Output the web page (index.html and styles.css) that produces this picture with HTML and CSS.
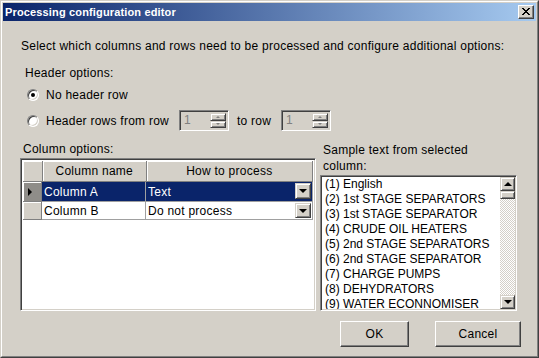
FILE: index.html
```html
<!DOCTYPE html>
<html lang="en">
<head>
    <meta charset="UTF-8">
    <title>Processing configuration editor</title>
    <link rel="stylesheet" href="styles.css">
</head>
<body>
    <div class="window">
        <div class="frame">
            <div class="titlebar">
                <span class="title">Processing configuration editor</span>
                <span class="close-btn">
                    <svg width="8" height="7" viewBox="0 0 8 7" shape-rendering="crispEdges">
                        <path d="M0 0h2v1h-2zM6 0h2v1h-2zM1 1h2v1h-2zM5 1h2v1h-2zM2 2h4v1h-4zM3 3h2v1h-2zM2 4h4v1h-4zM1 5h2v1h-2zM5 5h2v1h-2zM0 6h2v1h-2zM6 6h2v1h-2z" fill="#000"/>
                    </svg>
                </span>
            </div>
            <div class="content">
                <p class="intro">Select which columns and rows need to be processed and configure additional options:</p>

                <div class="group-label">Header options:</div>
                <div class="radio-row first">
                    <span class="radio checked"></span>
                    <span>No header row</span>
                </div>
                <div class="radio-row second">
                    <span class="radio"></span>
                    <span class="from-label">Header rows from row</span>
                    <span class="spin">
                        <span class="spin-value">1</span>
                        <span class="spin-buttons">
                            <span class="spin-btn"><span class="tiny-up"></span></span>
                            <span class="spin-btn"><span class="tiny-down"></span></span>
                        </span>
                    </span>
                    <span class="to-label">to row</span>
                    <span class="spin">
                        <span class="spin-value">1</span>
                        <span class="spin-buttons">
                            <span class="spin-btn"><span class="tiny-up"></span></span>
                            <span class="spin-btn"><span class="tiny-down"></span></span>
                        </span>
                    </span>
                </div>

                <div class="panels">
                    <div class="columns-panel">
                        <div class="panel-label">Column options:</div>
                        <div class="grid">
                            <div class="grid-row head">
                                <div class="row-head"></div>
                                <div class="col-head name">Column name</div>
                                <div class="col-head how">How to process</div>
                            </div>
                            <div class="grid-row current">
                                <div class="row-head"><span class="pointer"></span></div>
                                <div class="cells">
                                    <div class="cell name">Column A</div>
                                    <div class="cell how">Text<span class="combo-btn"><span class="arrow-down"></span></span></div>
                                </div>
                            </div>
                            <div class="grid-row">
                                <div class="row-head"></div>
                                <div class="cells">
                                    <div class="cell name">Column B</div>
                                    <div class="cell how">Do not process<span class="combo-btn"><span class="arrow-down"></span></span></div>
                                </div>
                            </div>
                        </div>
                    </div>

                    <div class="sample-panel">
                        <div class="panel-label two-lines">Sample text from selected<br>column:</div>
                        <div class="listbox">
                            <ul class="items">
                                <li>(1) English</li>
                                <li>(2) 1st STAGE SEPARATORS</li>
                                <li>(3) 1st STAGE SEPARATOR</li>
                                <li>(4) CRUDE OIL HEATERS</li>
                                <li>(5) 2nd STAGE SEPARATORS</li>
                                <li>(6) 2nd STAGE SEPARATOR</li>
                                <li>(7) CHARGE PUMPS</li>
                                <li>(8) DEHYDRATORS</li>
                                <li>(9) WATER ECONNOMISER</li>
                            </ul>
                            <div class="scrollbar">
                                <span class="sb-btn"><span class="arrow-up"></span></span>
                                <span class="sb-thumb"></span>
                                <span class="sb-track"></span>
                                <span class="sb-btn"><span class="arrow-down"></span></span>
                            </div>
                        </div>
                    </div>
                </div>

                <div class="buttons">
                    <button class="btn ok">OK</button>
                    <button class="btn cancel">Cancel</button>
                </div>
            </div>
        </div>
    </div>
</body>
</html>
```

FILE: styles.css
```css
:root {
    --face: #d4d0c8;
    --shadow: #808080;
    --dark: #404040;
    --light: #ffffff;
    --navy: #0a246a;
}
body { margin: 0; font-family: 'Liberation Sans', Arial, sans-serif; font-size: 12px; letter-spacing: 0.25px; color: #000; background: var(--face); }
.window { width: 539px; height: 358px; box-sizing: border-box; border: 1px solid; border-color: var(--face) var(--dark) var(--dark) var(--face); background: var(--face); }
.frame { height: 100%; box-sizing: border-box; border: 1px solid; border-color: var(--light) var(--shadow) var(--shadow) var(--light); padding: 1px; display: flex; flex-direction: column; }

/* Barra de titulo */
.titlebar { height: 18px; flex: none; display: flex; align-items: center; justify-content: space-between; padding: 0 2px; background: linear-gradient(to right, var(--navy), #a6caf0); }
.title { color: #fff; font-weight: bold; font-size: 11px; letter-spacing: 0.15px; }
.close-btn { width: 16px; height: 14px; box-sizing: border-box; display: flex; align-items: center; justify-content: center; background: var(--face); border: 1px solid; border-color: var(--light) var(--dark) var(--dark) var(--light); box-shadow: inset -1px -1px var(--shadow); }
.close-btn svg { display: block; margin-top: -1px; }

.content { flex: 1; padding: 0 15px 0 17px; display: flex; flex-direction: column; }
.intro { margin: 17px 0 0 1px; line-height: 16px; white-space: nowrap; }
.group-label { margin: 11px 0 0 5px; line-height: 16px; }

/* Opciones de encabezado */
.radio-row { display: flex; align-items: center; padding-left: 7px; }
.radio-row.first { height: 20px; margin-top: 4px; }
.radio-row.second { height: 21px; margin-top: 5px; }
.radio { width: 12px; height: 12px; box-sizing: border-box; border-radius: 50%; margin-right: 7px; position: relative; background: #fff; border: 1px solid; border-color: var(--shadow) var(--light) var(--light) var(--shadow); box-shadow: inset 1px 1px var(--dark), inset -1px -1px var(--face); }
.radio.checked::after { content: ''; position: absolute; left: 3px; top: 3px; width: 4px; height: 4px; border-radius: 50%; background: #000; }
.from-label { width: 133px; }
.to-label { width: 44px; margin-left: 8px; }
.spin { width: 50px; height: 21px; box-sizing: border-box; display: flex; background: var(--face); border: 1px solid; border-color: var(--shadow) var(--light) var(--light) var(--shadow); box-shadow: inset 1px 1px var(--dark), inset -1px -1px var(--face); padding: 2px; }
.spin-value { flex: 1; color: var(--shadow); padding-left: 2px; line-height: 15px; }
.spin-buttons { width: 16px; display: flex; flex-direction: column; }
.spin-btn { flex: 1; box-sizing: border-box; display: flex; align-items: center; justify-content: center; border: 1px solid; border-color: var(--face) var(--dark) var(--dark) var(--face); box-shadow: inset 1px 1px var(--light), inset -1px -1px var(--shadow); }
.tiny-up { width: 0; height: 0; border-left: 2px solid transparent; border-right: 2px solid transparent; border-bottom: 2px solid var(--shadow); }
.tiny-down { width: 0; height: 0; border-left: 2px solid transparent; border-right: 2px solid transparent; border-top: 2px solid var(--shadow); }

/* Paneles */
.panels { display: flex; gap: 4px; margin-top: 10px; }
.columns-panel { width: 296px; }
.sample-panel { width: 197px; }
.panel-label { margin-left: 3px; line-height: 16px; }
.panel-label.two-lines { margin-top: 1px; }

.grid { margin-top: 1px; height: 153px; box-sizing: border-box; background: #fff; border: 1px solid; border-color: var(--shadow) var(--light) var(--light) var(--shadow); box-shadow: inset 1px 1px var(--dark), inset -1px -1px var(--face); padding: 2px 2px 2px 2px; }
.grid-row { display: flex; height: 20px; }
.grid-row.head { height: 21px; }
.grid-row:last-child { height: 18px; }
.row-head { width: 20px; box-sizing: border-box; background: var(--face); border-right: 1px solid var(--shadow); border-bottom: 1px solid var(--shadow); box-shadow: inset 1px 1px var(--light); display: flex; align-items: center; justify-content: center; }
.grid-row.current .row-head { background: #8f8d89; }
.pointer { width: 0; height: 0; border-top: 4px solid transparent; border-bottom: 4px solid transparent; border-left: 4px solid #000; margin-left: -4px; }
.col-head { box-sizing: border-box; background: var(--face); border-right: 1px solid var(--shadow); border-bottom: 1px solid var(--shadow); box-shadow: inset 1px 1px var(--light); display: flex; align-items: center; justify-content: center; }
.name { width: 104px; }
.how { width: 167px; }
.cells { display: flex; }
.cell { box-sizing: border-box; border-right: 1px solid #a0a0a0; border-bottom: 1px solid #a0a0a0; display: flex; align-items: center; padding-left: 2px; position: relative; }
.grid-row.current .cells { outline: 1px dotted #fff; outline-offset: -1px; }
.grid-row.current .cell { background: var(--navy); color: #fff; }
.combo-btn { position: absolute; right: 1px; top: 1px; width: 16px; height: 16px; box-sizing: border-box; background: var(--face); display: flex; align-items: center; justify-content: center; border: 1px solid; border-color: var(--face) var(--dark) var(--dark) var(--face); box-shadow: inset 1px 1px var(--light), inset -1px -1px var(--shadow); }
.grid-row:last-child .combo-btn { top: 1px; height: 15px; }
.arrow-down { width: 0; height: 0; border-left: 4px solid transparent; border-right: 4px solid transparent; border-top: 4px solid #000; }
.arrow-up { width: 0; height: 0; border-left: 4px solid transparent; border-right: 4px solid transparent; border-bottom: 4px solid #000; }

/* Lista de muestra */
.listbox { margin-top: 1px; height: 136px; box-sizing: border-box; display: flex; background: #fff; border: 1px solid; border-color: var(--shadow) var(--light) var(--light) var(--shadow); box-shadow: inset 1px 1px var(--dark), inset -1px -1px var(--face); padding: 1px; }
.items { flex: 1; list-style: none; margin: 0; padding: 0 0 0 3px; overflow: hidden; letter-spacing: 0; }
.items li { line-height: 15px; white-space: nowrap; }
.scrollbar { width: 15px; display: flex; flex-direction: column; }
.sb-btn { height: 14px; box-sizing: border-box; background: var(--face); display: flex; align-items: center; justify-content: center; border: 1px solid; border-color: var(--face) var(--dark) var(--dark) var(--face); box-shadow: inset 1px 1px var(--light), inset -1px -1px var(--shadow); }
.sb-thumb { height: 8px; box-sizing: border-box; background: var(--face); border: 1px solid; border-color: var(--face) var(--dark) var(--dark) var(--face); box-shadow: inset 1px 1px var(--light), inset -1px -1px var(--shadow); }
.sb-track { flex: 1; background: repeating-conic-gradient(var(--face) 0 25%, #fff 0 50%) 0 0 / 2px 2px; }

/* Botones */
.buttons { display: flex; justify-content: flex-end; gap: 26px; margin-top: 10px; }
.btn { height: 26px; box-sizing: border-box; font-family: 'Liberation Sans', Arial, sans-serif; font-size: 12px; letter-spacing: 0.25px; color: #000; background: var(--face); border: 1px solid; border-color: var(--light) var(--dark) var(--dark) var(--light); box-shadow: inset -1px -1px var(--shadow); padding: 0; }
.btn.ok { width: 69px; }
.btn.cancel { width: 86px; }
```
